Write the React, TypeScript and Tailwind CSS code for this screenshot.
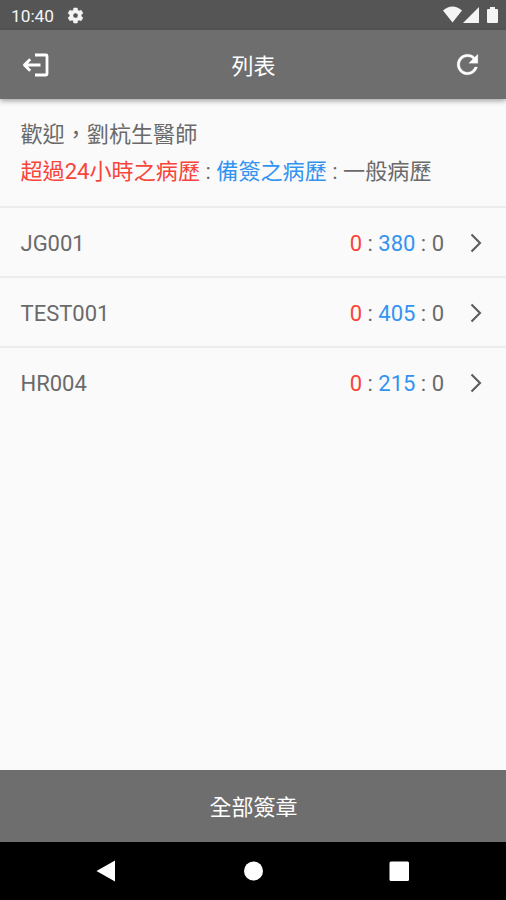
const rows = [
  { code: "JG001", late: 0, pending: 380, normal: 0 },
  { code: "TEST001", late: 0, pending: 405, normal: 0 },
  { code: "HR004", late: 0, pending: 215, normal: 0 },
];

function StatusBar() {
  return (
    <div className="flex h-[30px] items-center bg-[#555555] pl-[11px] pr-[7px] text-[#f4f4f4]">
      <span className="pt-[2px] text-[17.300px] leading-[28px]">10:40</span>
      <svg className="ml-[12px]" width="19" height="19" viewBox="0 0 24 24" fill="currentColor" stroke="currentColor" strokeWidth="0.6">
        <path d="M19.14 12.94c.04-.3.06-.61.06-.94s-.02-.64-.07-.94l2.03-1.58a.49.49 0 0 0 .12-.61l-1.92-3.32a.49.49 0 0 0-.59-.22l-2.39.96a7 7 0 0 0-1.62-.94l-.36-2.54a.48.48 0 0 0-.48-.41h-3.84a.47.47 0 0 0-.47.41l-.36 2.54c-.59.24-1.13.57-1.62.94l-2.39-.96a.48.48 0 0 0-.59.22L2.74 8.87a.48.48 0 0 0 .12.61l2.03 1.58c-.05.3-.09.63-.09.94s.02.64.07.94l-2.03 1.58a.49.49 0 0 0-.12.61l1.92 3.32c.12.22.37.29.59.22l2.39-.96c.5.38 1.03.7 1.62.94l.36 2.54c.05.24.24.41.48.41h3.84c.24 0 .44-.17.47-.41l.36-2.54a7 7 0 0 0 1.62-.94l2.39.96c.22.08.47 0 .59-.22l1.92-3.32a.48.48 0 0 0-.12-.61zM12 15.2a3.2 3.2 0 1 1 0-6.4 3.2 3.2 0 0 1 0 6.4z" />
      </svg>
      <svg className="ml-auto" width="56" height="20" viewBox="0 0 56 20" fill="currentColor">
        <path d="M0 5.5Q9.500-2.500 19 5.500L9.500 17.500z" />
        <path d="M36 2v16H20z" />
        <path d="M44 5q0-1 1-1h2V2h5v2h2q1 0 1 1v12q0 1-1 1h-9q-1 0-1-1z" />
      </svg>
    </div>
  );
}

export default function App() {
  return (
    <div className="flex h-[900px] w-[506px] flex-col overflow-hidden bg-[#fafafa] font-['Roboto','Noto_Sans_CJK_TC',sans-serif] text-[22px] text-[#6a6a6a]">
      <StatusBar />
      <header className="z-10 flex h-[69px] items-center justify-between bg-[#6e6e6e] pl-[21px] pr-[23px] text-white shadow-[0_2px_5px_rgba(0,0,0,0.35)]">
        <svg width="28" height="28" viewBox="0 0 28 28" fill="none" stroke="currentColor" strokeWidth="2.8">
          <path d="M14 4h11q1 0 1 1v18q0 1-1 1H14M19.500 14H3.500M9.200 8.200L3.400 14l5.800 5.800" strokeLinejoin="round" />
        </svg>
        <h1 className="pl-[6px] pt-[3px]">列表</h1>
        <svg width="31" height="31" viewBox="0 0 24 24" fill="currentColor" stroke="currentColor" strokeWidth="0.2">
          <path d="M17.65 6.35A8 8 0 1 0 19.73 14h-2.08A6 6 0 1 1 12 6c1.66 0 3.14.69 4.22 1.78L13 11h7V4z" />
        </svg>
      </header>
      <section className="h-[109px] border-b-2 border-[#ececec] px-[20.500px] pt-[17px] text-[22.100px] leading-[37px]">
        <p>歡迎，劉杭生醫師</p>
        <p><span className="text-[#f8443a]">超過24小時之病歷</span> : <span className="text-[#3294f0]">備簽之病歷</span> : 一般病歷</p>
      </section>
      <ul>
        {rows.map((r) => (
          <li key={r.code} className="flex h-[70px] items-center border-b-2 border-[#ececec] pl-[20.500px] pr-[22px] pt-[2px] last:border-0 last:pt-0">
            <span>{r.code}</span>
            <span className="ml-auto"><span className="text-[#f8443a]">{r.late}</span> : <span className="text-[#3294f0]">{r.pending}</span> : {r.normal}</span>
            <svg className="ml-[24px] text-[#5c5c5c]" width="16" height="20" viewBox="0 0 16 20" fill="none" stroke="currentColor" strokeWidth="2.1">
              <path d="M3.500 1.500L12 10l-8.500 8.500" />
            </svg>
          </li>
        ))}
      </ul>
      <button className="mt-auto h-[72px] bg-[#6e6e6e] pl-[1px] pt-[3px] text-white">全部簽章</button>
      <nav className="flex h-[58px] items-center justify-center bg-black text-white">
        <svg width="506" height="58" viewBox="0 0 506 58" fill="currentColor">
          <path d="M96.500 29l18.500-10.500v21z" />
          <circle cx="253.500" cy="29" r="9.500" />
          <rect x="389.500" y="19.500" width="19.500" height="19.500" rx="1.500" />
        </svg>
      </nav>
    </div>
  );
}
